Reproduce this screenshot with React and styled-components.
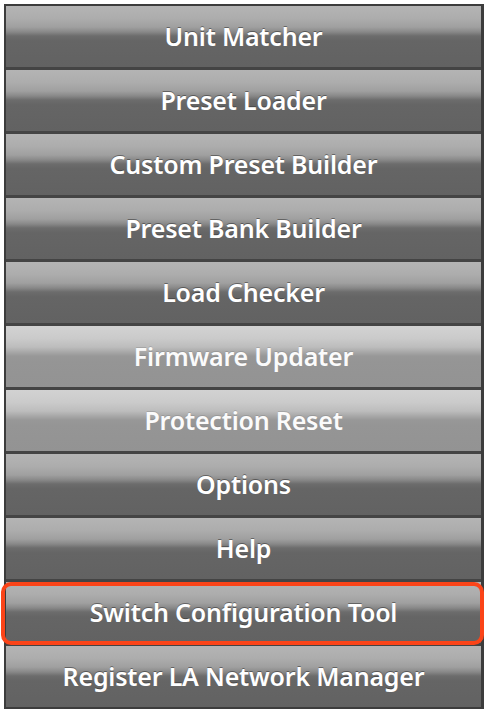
import React from "react";
import styled, { createGlobalStyle, css } from "styled-components";

const Global = createGlobalStyle`
  html, body { margin: 0; padding: 0; background: #ffffff; }
  body { font-family: "Noto Sans", "DejaVu Sans", sans-serif; }
`;

const Page = styled.div`
  padding: 4px;
  width: 480px;
`;

const Panel = styled.div`
  display: flex;
  flex-direction: column;
  gap: 3px;
  background: #444444;
  border-top: 2px solid #3c3c3c;
  border-left: 2px solid #3c3c3c;
  border-right: 3px solid #3c3c3c;
  border-bottom: 2px solid #3c3c3c;
`;

const normal = css`
  background: linear-gradient(
    to bottom,
    #b4b4b4 0px,
    #adadad 12px,
    #a0a0a0 21px,
    #888888 26px,
    #6c6c6c 30px,
    #656565 35px,
    #626262 100%
  );
  color: #ffffff;
  text-shadow: 0 -1px 0 rgba(40, 40, 40, 0.5);
`;

const dim = css`
  background: linear-gradient(
    to bottom,
    #d2d2d2 0px,
    #cbcbcb 12px,
    #bdbdbd 21px,
    #a8a8a8 26px,
    #989898 30px,
    #959595 35px,
    #939393 100%
  );
  color: #fbfbfb;
  text-shadow: 0 -1px 0 rgba(110, 110, 110, 0.3);
`;

const Row = styled.div`
  position: relative;
  display: flex;
  align-items: center;
  justify-content: center;
  height: 61px;
  box-sizing: border-box;
  padding-bottom: 2px;
  font-weight: 600;
  font-size: 25px;
  letter-spacing: -0.2px;
  ${(p) => (p.$dim ? dim : normal)}
`;

const Highlight = styled.div`
  position: absolute;
  left: -5px;
  right: -3px;
  top: 0;
  bottom: -2px;
  border: 4px solid #fb4418;
  border-radius: 10px;
  pointer-events: none;
`;

const items = [
  { label: "Unit Matcher" },
  { label: "Preset Loader" },
  { label: "Custom Preset Builder" },
  { label: "Preset Bank Builder" },
  { label: "Load Checker" },
  { label: "Firmware Updater", dim: true },
  { label: "Protection Reset", dim: true },
  { label: "Options" },
  { label: "Help" },
  { label: "Switch Configuration Tool", hl: true },
  { label: "Register LA Network Manager" },
];

export default function App() {
  return (
    <Page>
      <Global />
      <Panel>
        {items.map((it) => (
          <Row key={it.label} $dim={it.dim}>
            {it.label}
            {it.hl && <Highlight />}
          </Row>
        ))}
      </Panel>
    </Page>
  );
}
